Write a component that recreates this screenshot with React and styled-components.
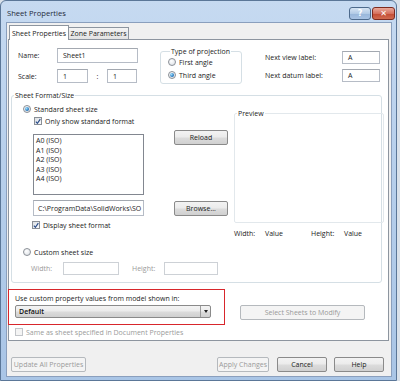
import React from 'react'
import styled, { createGlobalStyle, css } from 'styled-components'

const GlobalStyle = createGlobalStyle`
  body {
    margin: 0;
    background: #d9e1ea;
    font-family: 'Open Sans', 'Noto Sans', sans-serif;
    font-size: 7px;
    color: #1b1b1b;
  }
`

const Window = styled.div`
  box-sizing: border-box;
  width: 397px;
  height: 381px;
  border: 1px solid #5b7798;
  border-radius: 6px 6px 0 0;
  background: linear-gradient(#c6daf1, #b8d0ec 40%, #a9c5e6);
  padding: 0 4px 3px 5px;
  display: flex;
  flex-direction: column;
`

const TitleBar = styled.div`
  height: 21px;
  display: flex;
  align-items: flex-start;
  justify-content: space-between;
`

const Title = styled.div`
  font-size: 7.6px;
  color: #1e2a3a;
  padding: 7px 0 0 1px;
`

const Captions = styled.div`
  display: flex;
  gap: 1px;
  margin-top: 6px;
  margin-right: -3px;
`

const CaptionButton = styled.div`
  width: 22px;
  height: 13px;
  box-sizing: border-box;
  border: 1px solid #4d6a8c;
  border-radius: 3px;
  display: flex;
  align-items: center;
  justify-content: center;
  color: #fff;
  font-family: 'DejaVu Sans', sans-serif;
  font-weight: bold;
  font-size: 8px;
  background: linear-gradient(#d6e4f3, #b3cbe6 50%, #98b6da 51%, #a8c3e4);
  ${(p) =>
    p.$close &&
    css`
      width: 23px;
      border-color: #7d2a1f;
      background: linear-gradient(#e9a99b, #d6715e 50%, #c24a33 51%, #d16b4f);
    `}
`

const Client = styled.div`
  flex: 1;
  background: #f0f0f0;
  border: 1px solid #8a9fbd;
  padding: 2px 2px 0 1px;
  display: flex;
  flex-direction: column;
`

const Tabs = styled.div`
  display: flex;
  align-items: flex-end;
  height: 14px;
  margin-left: 1px;
`

const Tab = styled.div`
  box-sizing: border-box;
  border: 1px solid #8d959f;
  border-bottom: none;
  padding: 0 2px;
  display: flex;
  align-items: center;
  justify-content: center;
  white-space: nowrap;
  width: 60px;
  ${(p) =>
    p.$active
      ? css`
          height: 15px;
          margin-bottom: -1px;
          background: #fff;
          position: relative;
          z-index: 1;
        `
      : css`
          height: 12px;
          border-left: none;
          background: linear-gradient(#f4f4f4, #e2e2e2);
        `}
`

const Panel = styled.div`
  box-sizing: border-box;
  height: 302px;
  background: #fff;
  border: 1px solid #8d959f;
  padding: 8px 3px 0 1px;
  display: flex;
  flex-direction: column;
`

const TopRow = styled.div`
  display: flex;
  align-items: flex-start;
  padding-left: 8px;
`

const NameGrid = styled.div`
  display: grid;
  grid-template-columns: 39px 31px 19px 30px;
  grid-template-rows: 15px 14px;
  row-gap: 6px;
  align-items: center;
`

const Colon = styled.span`
  text-align: center;
`

const Input = styled.div`
  box-sizing: border-box;
  width: ${(p) => p.$w || 40}px;
  height: ${(p) => p.$h || 14}px;
  border: 1px solid #b6bcc6;
  border-top-color: #a3a8b0;
  background: #fff;
  padding: 0 ${(p) => p.$pad ?? 5}px;
  display: flex;
  align-items: center;
  white-space: nowrap;
  overflow: hidden;
  grid-column: ${(p) => p.$span || 'auto'};
`

const Group = styled.fieldset`
  margin: 0;
  padding: 0;
  border: 1px solid #d5dfe5;
  border-radius: 3px;
  min-width: 0;
`

const Legend = styled.legend`
  padding: 0 1px;
  margin-left: 2px;
  line-height: 9px;
  color: #1b1b1b;
`

const ProjectionGroup = styled(Group)`
  width: 82px;
  height: 37px;
  box-sizing: border-box;
  margin-left: 23px;
  margin-top: -1px;
  padding: 0 0 0 7px;
  display: flex;
  flex-direction: column;
  gap: 1px;
`

const NextGrid = styled.div`
  display: grid;
  grid-template-columns: 77px 38px;
  grid-template-rows: 13px 13px;
  row-gap: 5px;
  align-items: center;
  margin-left: 23px;
  margin-top: 3px;
`

const Option = styled.label`
  display: flex;
  align-items: center;
  gap: 3px;
  height: 12px;
  margin-left: ${(p) => p.$indent || 0}px;
  margin-top: ${(p) => p.$mt || 0}px;
  color: ${(p) => (p.$disabled ? '#9a9a9a' : 'inherit')};
`

const RadioDot = styled.span`
  box-sizing: border-box;
  width: 8px;
  height: 8px;
  border-radius: 50%;
  border: 1px solid #8a8f96;
  background: radial-gradient(circle at 40% 35%, #ffffff, #d8dde3);
  display: flex;
  align-items: center;
  justify-content: center;
  &::after {
    content: '';
    display: ${(p) => (p.$checked ? 'block' : 'none')};
    width: 4px;
    height: 4px;
    border-radius: 50%;
    background: radial-gradient(circle at 35% 35%, #9fe0ff, #1c6fb8 70%, #0b3f7a);
  }
`

const CheckBox = styled.span`
  box-sizing: border-box;
  width: 8px;
  height: 8px;
  border: 1px solid ${(p) => (p.$disabled ? '#c2c5c9' : '#8a8f96')};
  background: ${(p) => (p.$disabled ? '#f4f4f4' : 'linear-gradient(135deg, #dcdfe3, #fbfbfb)')};
  display: flex;
  align-items: center;
  justify-content: center;
`

const Check = () => (
  <svg width="7" height="7" viewBox="0 0 7 7">
    <path d="M1 3.6 L2.8 5.6 L6.2 0.8" fill="none" stroke="#2b4d8a" strokeWidth="1.4" />
  </svg>
)

const FormatGroup = styled(Group)`
  margin: 7px 3px 0 1px;
  padding: 0 0 7px 0;
`

const FormatGrid = styled.div`
  display: grid;
  grid-template-columns: 222px 150px;
`

const LeftStack = styled.div`
  padding: 3px 0 0 11px;
  display: flex;
  flex-direction: column;
`

const Row = styled.div`
  display: flex;
  align-items: flex-start;
  margin-top: ${(p) => p.$mt || 0}px;
  margin-left: ${(p) => p.$ml || 0}px;
`

const ListBox = styled.div`
  box-sizing: border-box;
  width: 111px;
  height: 61px;
  margin-top: 4px;
  border: 1px solid #828790;
  background: #fff;
  padding: 1px 2px;
  display: flex;
  flex-direction: column;
`

const ListItem = styled.div`
  height: 9.5px;
  line-height: 9.5px;
`

const Button = styled.div`
  box-sizing: border-box;
  width: ${(p) => p.$w}px;
  height: 15px;
  margin-left: ${(p) => p.$ml || 0}px;
  margin-top: ${(p) => p.$mt || 0}px;
  border: 1px solid #8a8a8a;
  border-radius: 2px;
  background: linear-gradient(#f3f3f3, #ebebeb 48%, #dcdcdc 52%, #d0d0d0);
  display: flex;
  align-items: center;
  justify-content: center;
  white-space: nowrap;
  ${(p) =>
    p.$disabled &&
    css`
      border-color: #b5b9bd;
      background: #f4f4f4;
      color: #9a9a9a;
    `}
`

const PreviewCol = styled.div`
  padding-top: 9px;
  display: flex;
  flex-direction: column;
`

const PreviewGroup = styled(Group)`
  height: 114px;
  box-sizing: border-box;
  border-color: #e2e8ec;
  border-radius: 2px;
`

const Values = styled.div`
  display: flex;
  margin-top: 6px;
  line-height: 9px;
`

const Cell = styled.span`
  width: ${(p) => p.$w}px;
`

const CustomBlock = styled.div`
  grid-column: 1 / span 2;
  padding: 8px 0 0 11px;
  display: flex;
  flex-direction: column;
`

const SizeRow = styled.div`
  display: flex;
  align-items: center;
  margin: 4px 0 0 8px;
  color: #9a9a9a;
`

const DisabledInput = styled(Input)`
  border-color: #cdd1d6;
  height: 13px;
  margin-right: ${(p) => p.$mr || 0}px;
`

const ModelRow = styled.div`
  display: flex;
  align-items: flex-start;
  margin: 6px 0 0 -2px;
`

const RedBox = styled.div`
  box-sizing: border-box;
  width: 217px;
  height: 36px;
  border: 1.5px solid #d8262c;
  padding: 4px 0 0 6px;
  display: flex;
  flex-direction: column;
  gap: 2px;
`

const Combo = styled.div`
  box-sizing: border-box;
  width: 196px;
  height: 13px;
  border: 1px solid #8a8a8a;
  border-radius: 2px;
  background: linear-gradient(#f3f3f3, #ebebeb 48%, #dcdcdc 52%, #d0d0d0);
  display: flex;
  align-items: center;
  justify-content: space-between;
  padding-left: 3px;
  color: #111;
  font-weight: 600;
`

const ComboArrow = styled.span`
  box-sizing: border-box;
  width: 10px;
  height: 11px;
  border-left: 1px solid #9c9c9c;
  display: flex;
  align-items: center;
  justify-content: center;
  &::after {
    content: '';
    border-left: 2.5px solid transparent;
    border-right: 2.5px solid transparent;
    border-top: 3px solid #222;
  }
`

const Footer = styled.div`
  display: flex;
  align-items: flex-start;
  padding: 16px 0 0 3px;
`

export default function App() {
  return (
    <>
      <GlobalStyle />
      <Window>
        <TitleBar>
          <Title>Sheet Properties</Title>
          <Captions>
            <CaptionButton>?</CaptionButton>
            <CaptionButton $close>✕</CaptionButton>
          </Captions>
        </TitleBar>
        <Client>
          <Tabs>
            <Tab $active>Sheet Properties</Tab>
            <Tab>Zone Parameters</Tab>
          </Tabs>
          <Panel>
            <TopRow>
              <NameGrid>
                <span>Name:</span>
                <Input $w={81} $h={15} $span="2 / span 3">Sheet1</Input>
                <span>Scale:</span>
                <Input $w={31}>1</Input>
                <Colon>:</Colon>
                <Input $w={30}>1</Input>
              </NameGrid>
              <ProjectionGroup>
                <Legend>Type of projection</Legend>
                <Option>
                  <RadioDot />
                  First angle
                </Option>
                <Option>
                  <RadioDot $checked />
                  Third angle
                </Option>
              </ProjectionGroup>
              <NextGrid>
                <span>Next view label:</span>
                <Input $w={38} $h={13}>A</Input>
                <span>Next datum label:</span>
                <Input $w={38} $h={13}>A</Input>
              </NextGrid>
            </TopRow>

            <FormatGroup>
              <Legend>Sheet Format/Size</Legend>
              <FormatGrid>
                <LeftStack>
                  <Option>
                    <RadioDot $checked />
                    Standard sheet size
                  </Option>
                  <Option $indent={11}>
                    <CheckBox>
                      <Check />
                    </CheckBox>
                    Only show standard format
                  </Option>
                  <Row $mt={3} $ml={10}>
                    <ListBox>
                      {['A0 (ISO)', 'A1 (ISO)', 'A2 (ISO)', 'A3 (ISO)', 'A4 (ISO)'].map((s) => (
                        <ListItem key={s}>{s}</ListItem>
                      ))}
                    </ListBox>
                    <Button $w={54} $ml={30}>Reload</Button>
                  </Row>
                  <Row $mt={5} $ml={10}>
                    <Input $w={111} $h={16} $pad={4}>C:\ProgramData\SolidWorks\SO</Input>
                    <Button $w={54} $ml={30} $mt={1}>Browse...</Button>
                  </Row>
                  <Option $indent={9} $mt={3}>
                    <CheckBox>
                      <Check />
                    </CheckBox>
                    Display sheet format
                  </Option>
                </LeftStack>
                <PreviewCol>
                  <PreviewGroup>
                    <Legend>Preview</Legend>
                  </PreviewGroup>
                  <Values>
                    <Cell $w={31}>Width:</Cell>
                    <Cell $w={46}>Value</Cell>
                    <Cell $w={33}>Height:</Cell>
                    <Cell $w={30}>Value</Cell>
                  </Values>
                </PreviewCol>
                <CustomBlock>
                  <Option>
                    <RadioDot />
                    Custom sheet size
                  </Option>
                  <SizeRow>
                    <Cell $w={32}>Width:</Cell>
                    <DisabledInput $w={56} $mr={13} />
                    <Cell $w={32}>Height:</Cell>
                    <DisabledInput $w={54} />
                  </SizeRow>
                </CustomBlock>
              </FormatGrid>
            </FormatGroup>

            <ModelRow>
              <RedBox>
                <span>Use custom property values from model shown in:</span>
                <Combo>
                  Default
                  <ComboArrow />
                </Combo>
              </RedBox>
              <Button $w={125} $ml={15} $mt={16} $disabled>
                Select Sheets to Modify
              </Button>
            </ModelRow>
            <Option $indent={5} $mt={1} $disabled>
              <CheckBox $disabled />
              Same as sheet specified in Document Properties
            </Option>
          </Panel>
          <Footer>
            <Button $w={75} $disabled>Update All Properties</Button>
            <Button $w={52} $ml={131} $disabled>Apply Changes</Button>
            <Button $w={50} $ml={8}>Cancel</Button>
            <Button $w={50} $ml={7}>Help</Button>
          </Footer>
        </Client>
      </Window>
    </>
  )
}
